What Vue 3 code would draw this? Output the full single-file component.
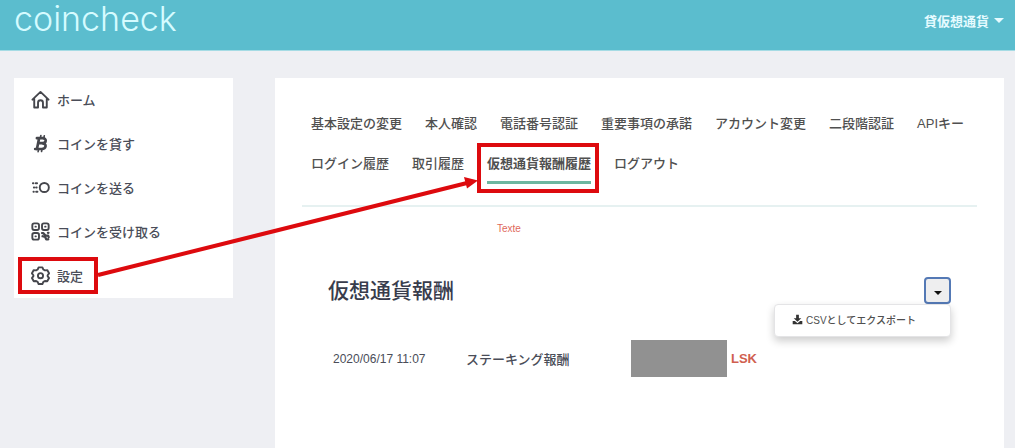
<template>
  <div class="page">
    <header class="topbar">
      <a href="#" class="logo">coincheck</a>
      <button type="button" class="account">
        貸仮想通貨
        <span class="caret"></span>
      </button>
    </header>

    <div class="layout">
      <nav class="sidebar">
        <a v-for="item in menu" :key="item.icon" href="#" class="side-link">
          <svg class="side-icon" viewBox="0 0 20 20" fill="none" stroke="currentColor" stroke-width="2" stroke-linejoin="round" stroke-linecap="round">
            <path v-if="item.icon === 'home'" d="M1.5 10.2 10 2l8.500 8.200M3.400 9v9.400h4v-5a2.600 2.600 0 0 1 5.200 0v5h4V9" />
            <g v-else-if="item.icon === 'bitcoin'" stroke-width="2.8">
              <path d="M8.600 4.200 6.200 16M6.200 4.400h6c4.600 0 4.200 5.200-.2 5.200H8.200M12 9.800c5 0 4.200 6-.8 6H4.400" />
              <path d="m10.400 1.600-.5 2.400M14 1.800l-.5 2.400M8 16l-.5 2.600M11.600 16l-.5 2.400" stroke-width="1.7" />
            </g>
            <g v-else-if="item.icon === 'send'">
              <circle cx="14" cy="10" r="4.8" />
              <path d="M2 5.600h.6M5 5.600h1.400M3 10h.4M5.400 10h.6M2.600 14.400h.4M5.400 14.400h1.400" />
            </g>
            <g v-else-if="item.icon === 'qr'">
              <rect x="1.4" y="1.4" width="7" height="7" rx="2" />
              <rect x="11.6" y="1.4" width="7" height="7" rx="2" />
              <rect x="1.4" y="11.6" width="7" height="7" rx="2" />
              <path d="M4.700 4.900h.4M14.900 4.900h.4M4.700 15.100h.4" />
              <path d="M11.600 11.600h1.200l2.200 2.400 3 .4.600 1.600M12.200 15l2.600.6 1.200 2.600h2.200M17.800 11.400h.6" stroke-width="2.4" />
            </g>
            <g v-else>
              <path d="M8 1.400h4l1 2.300 1.600.9 2.500-.3 1.900 3.400-1.500 2v1l1.500 2-1.900 3.400-2.500-.3-1.600.9-1 2.300H8l-1-2.300-1.600-.9-2.500.3L1 12.700l1.500-2v-1L1 7.700l1.900-3.400 2.500.3L7 3.700z" />
              <circle cx="10" cy="10.2" r="2.7" />
            </g>
          </svg>
          <span>{{ item.label }}</span>
        </a>
      </nav>

      <main class="content">
        <nav class="tabs">
          <a
            v-for="tab in tabs"
            :key="tab"
            href="#"
            class="tab"
            :class="{ active: tab === activeTab }"
            @click.prevent="activeTab = tab"
          >{{ tab }}</a>
        </nav>

        <p class="notice">Texte</p>

        <section class="rewards">
          <div class="rewards-head">
            <h1>仮想通貨報酬</h1>
            <div class="dropdown">
              <button type="button" class="toggle" aria-label="メニュー" :aria-expanded="open" @click="open = !open">
                <span class="caret small"></span>
              </button>
              <div v-if="open" class="dropdown-menu">
                <a href="#" class="export">
                  <svg viewBox="0 0 16 16" fill="currentColor">
                    <path d="M6 1h4v5h3.500L8 11.300 2.500 6H6z" />
                    <path d="M1 10h3.200L8 13.400 11.800 10H15v5H1z" />
                  </svg>
                  <span>CSVとしてエクスポート</span>
                </a>
              </div>
            </div>
          </div>

          <table class="history">
            <tbody>
              <tr v-for="row in rows" :key="row.date">
                <td class="date">{{ row.date }}</td>
                <td class="kind">{{ row.kind }}</td>
                <td>
                  <div class="amount">
                    <span class="mask"></span>
                    <strong>{{ row.currency }}</strong>
                  </div>
                </td>
              </tr>
            </tbody>
          </table>
        </section>
      </main>
    </div>

    <svg class="guide" width="620" height="310" viewBox="0 0 620 310" fill="none" stroke="#dd0a0e" stroke-width="4">
      <rect x="20" y="259" width="76" height="33" />
      <rect x="479" y="145" width="118" height="46" />
      <path d="M98 275 467 183" />
      <path d="M478 180.500 467 188.500 464 177z" fill="#dd0a0e" stroke="none" />
    </svg>
  </div>
</template>

<script setup>
import { ref } from 'vue'

const menu = [
  { icon: 'home', label: 'ホーム' },
  { icon: 'bitcoin', label: 'コインを貸す' },
  { icon: 'send', label: 'コインを送る' },
  { icon: 'qr', label: 'コインを受け取る' },
  { icon: 'settings', label: '設定' }
]

const tabs = [
  '基本設定の変更',
  '本人確認',
  '電話番号認証',
  '重要事項の承諾',
  'アカウント変更',
  '二段階認証',
  'APIキー',
  'ログイン履歴',
  '取引履歴',
  '仮想通貨報酬履歴',
  'ログアウト'
]

const rows = [
  { date: '2020/06/17 11:07', kind: 'ステーキング報酬', currency: 'LSK' }
]

const activeTab = ref('仮想通貨報酬履歴')
const open = ref(true)
</script>

<style>
body {
  margin: 0;
  background: #eeeff3;
}
</style>

<style scoped>
.page {
  position: relative;
  display: flex;
  flex-direction: column;
  min-height: 100vh;
  font-family: "Liberation Sans", "Noto Sans CJK JP", sans-serif;
  font-size: 13px;
  font-weight: 500;
  color: #4a4d58;
}

a {
  color: inherit;
  text-decoration: none;
}

button {
  font: inherit;
  cursor: pointer;
}

/* Header */
.topbar {
  display: flex;
  justify-content: space-between;
  height: 50px;
  padding: 0 11px 0 14px;
  background: #5bbdce;
  border-bottom: 1px solid #a5dbe4;
}

.logo {
  font-family: Inter, sans-serif;
  font-size: 34px;
  font-weight: 300;
  line-height: 38px;
  color: #d5fbff;
}

.account {
  display: flex;
  align-items: center;
  gap: 5px;
  height: 40px;
  padding: 0;
  border: 0;
  background: none;
  color: #e6fbff;
  font-weight: 700;
}

.caret {
  border: 5px solid transparent;
  border-top-color: currentColor;
  border-bottom: 0;
}

.caret.small {
  border-width: 4px;
  border-bottom: 0;
}

/* Columns */
.layout {
  display: flex;
  flex: 1;
  align-items: flex-start;
  gap: 42px;
  padding: 27px 11px 0 14px;
}

.sidebar {
  width: 219px;
  flex: none;
  background: #fff;
}

.side-link {
  display: flex;
  align-items: center;
  gap: 7px;
  height: 42px;
  padding: 0 0 2px 17px;
}

.side-icon {
  width: 19px;
  height: 19px;
  color: #45464c;
}

.content {
  flex: 1;
  align-self: stretch;
  min-width: 0;
  padding: 26px 27px 0;
  background: #fff;
}

/* Tabs */
.tabs {
  display: flex;
  flex-wrap: wrap;
  column-gap: 23px;
  padding: 0 0 21px 9px;
  border-bottom: 2px solid #e6f1f1;
}

.tab {
  padding: 10px 0 7px;
  line-height: 20px;
  border-bottom: 3px solid transparent;
  color: #505050;
}

.tab.active {
  border-bottom-color: #6db7a0;
  font-weight: 700;
}

.notice {
  margin: 0;
  padding: 14px 0 0 195px;
  font-size: 10px;
  line-height: 16px;
  color: #e0695c;
}

/* Rewards */
.rewards {
  padding: 40px 26px 0;
}

.rewards-head {
  display: flex;
  align-items: center;
  justify-content: space-between;
}

h1 {
  margin: 0;
  font-size: 21px;
  font-weight: 500;
  line-height: 27px;
  color: #383c4c;
}

.dropdown {
  position: relative;
}

.toggle {
  display: flex;
  align-items: center;
  justify-content: center;
  width: 27px;
  height: 27px;
  padding: 4px 0 0;
  border: 2px solid #5479b5;
  border-radius: 4px;
  background: #eeeeef;
  color: #111;
}

.dropdown-menu {
  position: absolute;
  top: 100%;
  right: 0;
  box-sizing: border-box;
  width: 177px;
  border: 1px solid #e4e4e6;
  border-radius: 4px;
  background: #fff;
  box-shadow: 0 4px 9px rgba(0, 0, 0, 0.2);
}

.export {
  display: flex;
  align-items: center;
  gap: 3px;
  height: 29px;
  padding: 0 0 2px 17px;
  font-size: 10px;
  white-space: nowrap;
  color: #505050;
}

.export svg {
  width: 11px;
  height: 11px;
  color: #333;
}

.history {
  width: 100%;
  margin-top: 36px;
  border-collapse: collapse;
}

.history td {
  padding: 0;
}

.history .date {
  width: 133px;
  padding-left: 5px;
  font-size: 12px;
}

.history .kind {
  width: 165px;
}

.amount {
  display: flex;
  align-items: center;
  gap: 4px;
}

.amount strong {
  color: #d0604f;
}

.mask {
  width: 96px;
  height: 37px;
  background: #919191;
}

.guide {
  position: absolute;
  top: 0;
  left: 0;
  pointer-events: none;
}
</style>
